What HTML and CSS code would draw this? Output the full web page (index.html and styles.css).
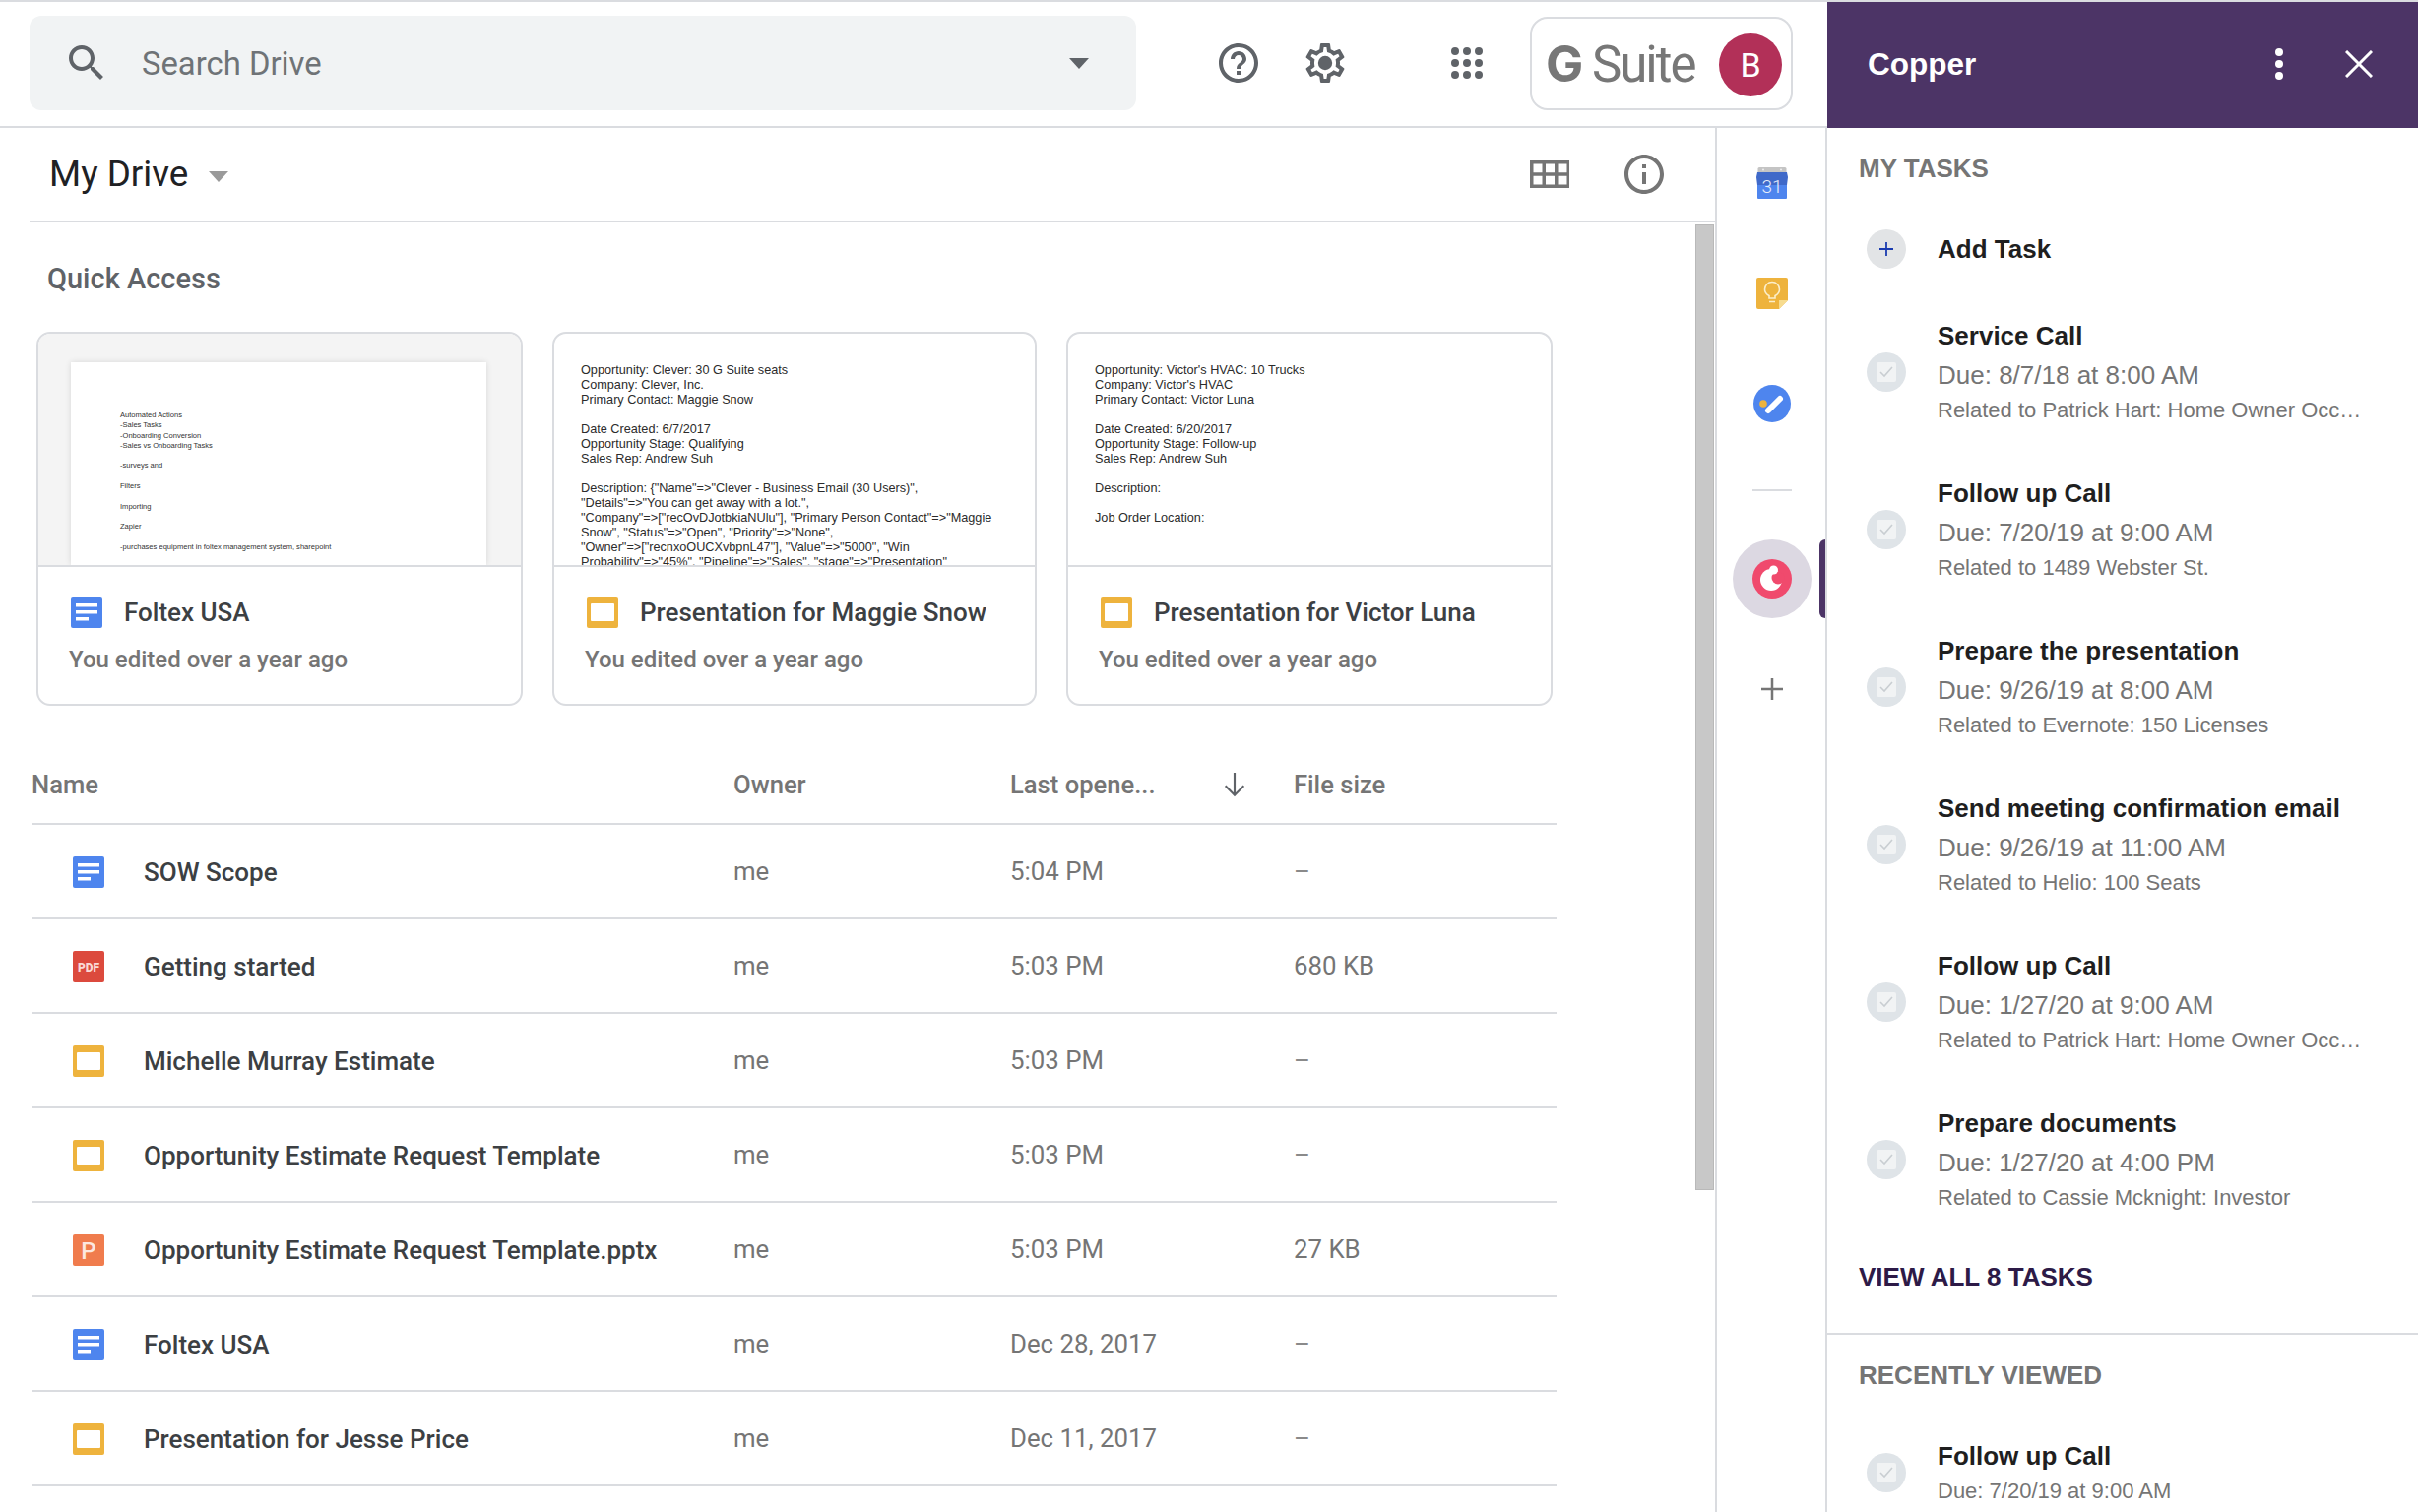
FILE: index.html
```html
<!DOCTYPE html>
<html lang="en">
<head>
  <meta charset="UTF-8" />
  <title>My Drive - Google Drive</title>
  <link rel="stylesheet" href="styles.css">
</head>
<body>

  <!-- Shared icons -->
  <svg class="sprite" aria-hidden="true">
    <symbol id="doc" viewBox="0 0 32 32">
      <rect width="32" height="32" rx="2" fill="#4e85ee"/>
      <rect x="5" y="7" width="22" height="3.5" fill="#fff"/>
      <rect x="5" y="14" width="22" height="3.5" fill="#fff"/>
      <rect x="5" y="21" width="13" height="3.5" fill="#fff"/>
    </symbol>
    <symbol id="slides" viewBox="0 0 32 32">
      <rect width="32" height="32" rx="2" fill="#eeb33d"/>
      <rect x="4" y="7" width="24" height="18" rx="1" fill="#fff"/>
    </symbol>
    <symbol id="check" viewBox="0 0 40 40">
      <circle cx="20" cy="20" r="20" fill="#dfe4e8"/>
      <rect x="10" y="10" width="20" height="20" rx="2" fill="#f1f3f4"/>
      <path d="M14 20l4 4 8-9" fill="none" stroke="#c9ced2" stroke-width="1.6"/>
    </symbol>
  </svg>

  <div class="app">
    <div class="left">

      <header class="topbar">
        <div class="search">
          <svg class="search-icon" viewBox="0 0 24 24"><path d="M15.5 14h-.79l-.28-.27C15.41 12.59 16 11.11 16 9.5 16 5.91 13.09 3 9.5 3S3 5.91 3 9.5 5.91 16 9.5 16c1.61 0 3.09-.59 4.23-1.57l.27.28v.79l5 4.99L20.49 19l-4.99-5zm-6 0C7.01 14 5 11.99 5 9.5S7.01 5 9.5 5 14 7.01 14 9.5 11.99 14 9.5 14z"/></svg>
          <span class="search-text">Search Drive</span>
          <span class="caret caret-dark"></span>
        </div>
        <svg class="top-icon help" viewBox="0 0 24 24"><path d="M11 18h2v-2h-2v2zm1-16C6.48 2 2 6.48 2 12s4.48 10 10 10 10-4.48 10-10S17.52 2 12 2zm0 18c-4.41 0-8-3.59-8-8s3.59-8 8-8 8 3.59 8 8-3.59 8-8 8zm0-14c-2.21 0-4 1.79-4 4h2c0-1.1.9-2 2-2s2 .9 2 2c0 2-3 1.75-3 5h2c0-2.25 3-2.5 3-5 0-2.21-1.79-4-4-4z"/></svg>
        <svg class="top-icon gear" viewBox="0 0 24 24"><path d="M19.43 12.98c.04-.32.07-.64.07-.98 0-.34-.03-.66-.07-.98l2.11-1.65c.19-.15.24-.42.12-.64l-2-3.46c-.09-.16-.26-.25-.44-.25-.06 0-.12.01-.17.03l-2.49 1c-.52-.4-1.08-.73-1.69-.98l-.38-2.65C14.46 2.18 14.25 2 14 2h-4c-.25 0-.46.18-.49.42l-.38 2.65c-.61.25-1.17.59-1.69.98l-2.49-1c-.06-.02-.12-.03-.18-.03-.17 0-.34.09-.43.25l-2 3.46c-.13.22-.07.49.12.64l2.11 1.65c-.04.32-.07.65-.07.98 0 .33.03.66.07.98l-2.11 1.65c-.19.15-.24.42-.12.64l2 3.46c.09.16.26.25.44.25.06 0 .12-.01.17-.03l2.49-1c.52.4 1.08.73 1.69.98l.38 2.65c.03.24.24.42.49.42h4c.25 0 .46-.18.49-.42l.38-2.65c.61-.25 1.17-.59 1.69-.98l2.49 1c.06.02.12.03.18.03.17 0 .34-.09.43-.25l2-3.46c.12-.22.07-.49-.12-.64l-2.11-1.65zm-1.98-1.71c.04.31.05.52.05.73 0 .21-.02.43-.05.73l-.14 1.13.89.7 1.08.84-.7 1.21-1.27-.51-1.04-.42-.9.68c-.43.32-.84.56-1.25.73l-1.06.43-.16 1.13-.2 1.35h-1.4l-.19-1.35-.16-1.13-1.06-.43c-.43-.18-.83-.41-1.23-.71l-.91-.7-1.06.43-1.27.51-.7-1.21 1.08-.84.89-.7-.14-1.13c-.03-.31-.05-.54-.05-.74s.02-.43.05-.73l.14-1.13-.89-.7-1.08-.84.7-1.21 1.27.51 1.04.42.9-.68c.43-.32.84-.56 1.25-.73l1.06-.43.16-1.13.2-1.35h1.39l.19 1.35.16 1.13 1.06.43c.43.18.83.41 1.23.71l.91.7 1.06-.43 1.27-.51.7 1.21-1.07.85-.89.7.14 1.13z"/><circle cx="12" cy="12" r="3.6"/></svg>
        <svg class="apps" viewBox="0 0 32 32">
          <circle cx="4" cy="4" r="4"/><circle cx="16" cy="4" r="4"/><circle cx="28" cy="4" r="4"/>
          <circle cx="4" cy="16" r="4"/><circle cx="16" cy="16" r="4"/><circle cx="28" cy="16" r="4"/>
          <circle cx="4" cy="28" r="4"/><circle cx="16" cy="28" r="4"/><circle cx="28" cy="28" r="4"/>
        </svg>
        <div class="suite">
          <span class="suite-name"><b>G</b> Suite</span>
          <span class="avatar">B</span>
        </div>
      </header>

      <div class="below">
        <section class="drive">
          <div class="drive-bar">
            <h1 class="drive-title">My Drive</h1>
            <span class="caret caret-light"></span>
            <svg class="grid-icon" viewBox="0 0 40 28">
              <path fill="#757575" fill-rule="evenodd" d="M0 0h41v28H0zM3.500 3.500v8.750h9V3.500zm12.500 0v8.750h9V3.500zm12.500 0v8.750h9V3.500zM3.500 15.750v8.750h9v-8.750zm12.500 0v8.750h9v-8.750zm12.500 0v8.750h9v-8.750z"/>
            </svg>
            <svg class="info-icon" viewBox="0 0 24 24"><path d="M11 7h2v2h-2zm0 4h2v6h-2zm1-9C6.48 2 2 6.48 2 12s4.48 10 10 10 10-4.48 10-10S17.52 2 12 2zm0 18c-4.41 0-8-3.59-8-8s3.59-8 8-8 8 3.59 8 8-3.59 8-8 8z"/></svg>
          </div>

          <div class="drive-body">
            <div class="drive-main">
              <h2 class="quick-title">Quick Access</h2>

              <div class="cards">
                <div class="card card-first">
                  <div class="thumb thumb-grey">
                    <div class="paper">
                      <p>Automated Actions<br>-Sales Tasks<br>-Onboarding Conversion<br>-Sales vs Onboarding Tasks</p>
                      <p>-surveys and</p>
                      <p>Filters</p>
                      <p>Importing</p>
                      <p>Zapier</p>
                      <p>-purchases equipment in foltex management system, sharepoint</p>
                    </div>
                  </div>
                  <div class="card-info">
                    <div class="card-name"><svg class="file-icon"><use href="#doc"/></svg>Foltex USA</div>
                    <div class="card-sub">You edited over a year ago</div>
                  </div>
                </div>

                <div class="card card-mid">
                  <div class="thumb slide-text">
                    <p>Opportunity: Clever: 30 G Suite seats<br>Company: Clever, Inc.<br>Primary Contact: Maggie Snow</p>
                    <p>Date Created: 6/7/2017<br>Opportunity Stage: Qualifying<br>Sales Rep: Andrew Suh</p>
                    <p>Description: {"Name"=&gt;"Clever - Business Email (30 Users)",<br>"Details"=&gt;"You can get away with a lot.",<br>"Company"=&gt;["recOvDJotbkiaNUlu"], "Primary Person Contact"=&gt;"Maggie<br>Snow", "Status"=&gt;"Open", "Priority"=&gt;"None",<br>"Owner"=&gt;["recnxoOUCXvbpnL47"], "Value"=&gt;"5000", "Win<br>Probability"=&gt;"45%", "Pipeline"=&gt;"Sales", "stage"=&gt;"Presentation"</p>
                  </div>
                  <div class="card-info">
                    <div class="card-name"><svg class="file-icon"><use href="#slides"/></svg>Presentation for Maggie Snow</div>
                    <div class="card-sub">You edited over a year ago</div>
                  </div>
                </div>

                <div class="card card-last">
                  <div class="thumb slide-text">
                    <p>Opportunity: Victor's HVAC: 10 Trucks<br>Company: Victor's HVAC<br>Primary Contact: Victor Luna</p>
                    <p>Date Created: 6/20/2017<br>Opportunity Stage: Follow-up<br>Sales Rep: Andrew Suh</p>
                    <p>Description:</p>
                    <p>Job Order Location:</p>
                  </div>
                  <div class="card-info">
                    <div class="card-name"><svg class="file-icon"><use href="#slides"/></svg>Presentation for Victor Luna</div>
                    <div class="card-sub">You edited over a year ago</div>
                  </div>
                </div>
              </div>

              <div class="files">
                <div class="file-row file-head">
                  <div>Name</div>
                  <div>Owner</div>
                  <div class="sort-cell">Last opene...
                    <svg class="sort-arrow" viewBox="0 0 24 24"><path d="M12 3v17M5 13l7 7 7-7" fill="none" stroke="#5f6368" stroke-width="1.600"/></svg>
                  </div>
                  <div>File size</div>
                </div>

                <div class="file-row">
                  <div class="file-name"><svg class="file-icon"><use href="#doc"/></svg>SOW Scope</div>
                  <div>me</div><div>5:04 PM</div><div class="dash">–</div>
                </div>
                <div class="file-row">
                  <div class="file-name">
                    <svg class="file-icon" viewBox="0 0 32 32"><rect width="32" height="32" rx="2" fill="#dc4a3d"/><text class="pdf-label" x="16" y="20.500" text-anchor="middle">PDF</text></svg>
                    Getting started
                  </div>
                  <div>me</div><div>5:03 PM</div><div>680 KB</div>
                </div>
                <div class="file-row">
                  <div class="file-name"><svg class="file-icon"><use href="#slides"/></svg>Michelle Murray Estimate</div>
                  <div>me</div><div>5:03 PM</div><div class="dash">–</div>
                </div>
                <div class="file-row">
                  <div class="file-name"><svg class="file-icon"><use href="#slides"/></svg>Opportunity Estimate Request Template</div>
                  <div>me</div><div>5:03 PM</div><div class="dash">–</div>
                </div>
                <div class="file-row">
                  <div class="file-name">
                    <svg class="file-icon" viewBox="0 0 32 32"><rect width="32" height="32" rx="2" fill="#f07c4d"/><text class="ppt-label" x="16" y="25" text-anchor="middle">P</text></svg>
                    Opportunity Estimate Request Template.pptx
                  </div>
                  <div>me</div><div>5:03 PM</div><div>27 KB</div>
                </div>
                <div class="file-row">
                  <div class="file-name"><svg class="file-icon"><use href="#doc"/></svg>Foltex USA</div>
                  <div>me</div><div>Dec 28, 2017</div><div class="dash">–</div>
                </div>
                <div class="file-row">
                  <div class="file-name"><svg class="file-icon"><use href="#slides"/></svg>Presentation for Jesse Price</div>
                  <div>me</div><div>Dec 11, 2017</div><div class="dash">–</div>
                </div>
              </div>
            </div>

            <div class="scrollbar"><div class="scroll-thumb"></div></div>
          </div>
        </section>

        <!-- Add-on rail -->
        <aside class="rail">
          <svg class="rail-icon cal" viewBox="0 0 32 32">
            <rect x="1.500" width="29" height="8" rx="1.500" fill="#c4c4c4"/>
            <circle cx="7" cy="2.500" r="1" fill="#eee"/>
            <circle cx="25" cy="2.500" r="1" fill="#eee"/>
            <rect x="1" y="17" width="30" height="15" rx="1" fill="#4e85ee"/>
            <path d="M1 5h30l1 5-1 8H1l-1-8z" fill="#3f69c9"/>
            <text class="cal-day" x="16" y="25.500" text-anchor="middle">31</text>
          </svg>
          <svg class="rail-icon keep" viewBox="0 0 32 32">
            <path d="M2 0h28a2 2 0 0 1 2 2v21l-9 9H2a2 2 0 0 1-2-2V2a2 2 0 0 1 2-2z" fill="#eeb33d"/>
            <path d="M32 23h-9v9z" fill="#f7dc8f"/>
            <path d="M13 21v-2.500c-2.500-1.300-4.500-3.500-4.500-6.500a7.500 7.500 0 0 1 15 0c0 3-2 5.200-4.500 6.500V21zM13 24.500h6" fill="none" stroke="#fbeecb" stroke-width="1.600"/>
          </svg>
          <svg class="rail-icon tasks" viewBox="0 0 38 38">
            <circle cx="19" cy="19" r="19" fill="#4e85ee"/>
            <circle cx="10" cy="19" r="3.800" fill="#eeb33d"/>
            <path d="M15 26L27 14" stroke="#fff" stroke-width="6" stroke-linecap="round"/>
          </svg>
          <div class="rail-line"></div>
          <div class="rail-active">
            <svg class="copper-logo" viewBox="0 0 40 40">
              <circle cx="20" cy="20" r="20" fill="#f04a6d"/>
              <circle cx="19" cy="21" r="11" fill="#fff"/>
              <circle cx="26" cy="19" r="6.500" fill="#f04a6d"/>
              <circle cx="21.500" cy="11" r="4.500" fill="#fff"/>
            </svg>
            <span class="rail-tab"></span>
          </div>
          <svg class="rail-add" viewBox="0 0 24 24"><path d="M12 1v22M1 12h22" stroke="#757575" stroke-width="2.500" fill="none"/></svg>
        </aside>
      </div>
    </div>

    <!-- Copper panel -->
    <aside class="panel">
      <div class="panel-head">
        <span class="panel-title">Copper</span>
        <svg class="panel-dots" viewBox="0 0 8 32"><circle cx="4" cy="4" r="4"/><circle cx="4" cy="16" r="4"/><circle cx="4" cy="28" r="4"/></svg>
        <svg class="panel-close" viewBox="0 0 28 28"><path d="M1 1l26 26M27 1L1 27" stroke="#fff" stroke-width="3" fill="none"/></svg>
      </div>

      <div class="panel-section">
        <h3 class="section-title">MY TASKS</h3>

        <div class="add-task">
          <span class="add-circle"><svg viewBox="0 0 14 14"><path d="M7 0v14M0 7h14" stroke="#1a3bb0" stroke-width="1.800" fill="none"/></svg></span>
          <span class="task-name">Add Task</span>
        </div>

        <div class="task">
          <svg class="task-check"><use href="#check"/></svg>
          <div class="task-text">
            <div class="task-name">Service Call</div>
            <div class="task-due">Due: 8/7/18 at 8:00 AM</div>
            <div class="task-rel">Related to Patrick Hart: Home Owner Occ…</div>
          </div>
        </div>
        <div class="task">
          <svg class="task-check"><use href="#check"/></svg>
          <div class="task-text">
            <div class="task-name">Follow up Call</div>
            <div class="task-due">Due: 7/20/19 at 9:00 AM</div>
            <div class="task-rel">Related to 1489 Webster St.</div>
          </div>
        </div>
        <div class="task">
          <svg class="task-check"><use href="#check"/></svg>
          <div class="task-text">
            <div class="task-name">Prepare the presentation</div>
            <div class="task-due">Due: 9/26/19 at 8:00 AM</div>
            <div class="task-rel">Related to Evernote: 150 Licenses</div>
          </div>
        </div>
        <div class="task">
          <svg class="task-check"><use href="#check"/></svg>
          <div class="task-text">
            <div class="task-name">Send meeting confirmation email</div>
            <div class="task-due">Due: 9/26/19 at 11:00 AM</div>
            <div class="task-rel">Related to Helio: 100 Seats</div>
          </div>
        </div>
        <div class="task">
          <svg class="task-check"><use href="#check"/></svg>
          <div class="task-text">
            <div class="task-name">Follow up Call</div>
            <div class="task-due">Due: 1/27/20 at 9:00 AM</div>
            <div class="task-rel">Related to Patrick Hart: Home Owner Occ…</div>
          </div>
        </div>
        <div class="task">
          <svg class="task-check"><use href="#check"/></svg>
          <div class="task-text">
            <div class="task-name">Prepare documents</div>
            <div class="task-due">Due: 1/27/20 at 4:00 PM</div>
            <div class="task-rel">Related to Cassie Mcknight: Investor</div>
          </div>
        </div>

        <a class="view-all">VIEW ALL 8 TASKS</a>
      </div>

      <div class="panel-section">
        <h3 class="section-title">RECENTLY VIEWED</h3>
        <div class="task task-small">
          <svg class="task-check"><use href="#check"/></svg>
          <div class="task-text">
            <div class="task-name">Follow up Call</div>
            <div class="task-due">Due: 7/20/19 at 9:00 AM</div>
          </div>
        </div>
      </div>
    </aside>
  </div>

</body>
</html>
```
FILE: styles.css
```css
:root {
  --line: #dadce0;
  --grey-text: #757575;
  --dark-text: #3c4043;
  --purple: #4c3466;
}

* {
  box-sizing: border-box;
}

html, body {
  margin: 0;
  padding: 0;
  height: 100%;
  overflow: hidden;
  background: #fff;
  font-family: Roboto, sans-serif;
}

h1, h2, h3, p {
  margin: 0;
  font-weight: inherit;
}

.sprite {
  position: absolute;
  width: 0;
  height: 0;
}

.app {
  display: flex;
  width: 2456px;
  height: 1536px;
  overflow: hidden;
}

.left {
  width: 1856px;
  flex: none;
  display: flex;
  flex-direction: column;
}

/* Top bar */
.topbar {
  height: 130px;
  flex: none;
  display: flex;
  align-items: center;
  padding: 0 35px 2px 30px;
  border-top: 2px solid var(--line);
  border-bottom: 2px solid var(--line);
}

.search {
  width: 1124px;
  height: 96px;
  flex: none;
  display: flex;
  align-items: center;
  padding: 0 48px 0 34px;
  background: #f1f3f4;
  border-radius: 12px;
}

.search-icon {
  width: 48px;
  height: 48px;
  fill: #5f6368;
}

.search-text {
  margin-left: 32px;
  padding-top: 2px;
  font-size: 32.8px;
  color: #6f7377;
}

.caret {
  width: 0;
  height: 0;
  border-left: 10px solid transparent;
  border-right: 10px solid transparent;
}

.caret-dark {
  margin-left: auto;
  border-top: 11px solid #5f6368;
}

.caret-light {
  margin-left: 21px;
  margin-top: 4px;
  border-top: 11px solid #9a9a9a;
}

.top-icon {
  width: 48px;
  height: 48px;
  flex: none;
  fill: #5f6368;
}

.help {
  margin-left: 80px;
}

.gear {
  margin-left: 40px;
}

.apps {
  width: 32px;
  height: 32px;
  flex: none;
  margin-left: 104px;
  fill: #5f6368;
}

.suite {
  width: 267px;
  height: 95px;
  flex: none;
  margin-left: 48px;
  display: flex;
  align-items: center;
  justify-content: space-between;
  padding: 0 9px 0 14px;
  border: 2px solid var(--line);
  border-radius: 18px;
}

.suite-name {
  font-size: 51px;
  color: #777;
  letter-spacing: -2px;
  white-space: nowrap;
}

.suite-name b {
  font-family: Inter, Roboto, sans-serif;
  font-weight: 700;
}

.avatar {
  width: 64px;
  height: 64px;
  margin-top: 4px;
  display: flex;
  align-items: center;
  justify-content: center;
  border-radius: 50%;
  background: #b23058;
  color: #fff;
  font-size: 34px;
}

.below {
  flex: 1;
  display: flex;
  min-height: 0;
}

/* Drive */
.drive {
  width: 1744px;
  flex: none;
  display: flex;
  flex-direction: column;
  border-right: 2px solid var(--line);
}

.drive-bar {
  height: 96px;
  flex: none;
  margin-left: 30px;
  display: flex;
  align-items: center;
  padding: 0 48px 0 20px;
  border-bottom: 2px solid var(--line);
}

.drive-title {
  margin-bottom: 2px;
  font-size: 36.8px;
  color: #202124;
}

.grid-icon {
  width: 40px;
  height: 28px;
  margin-left: auto;
}

.info-icon {
  width: 48px;
  height: 48px;
  margin-left: 52px;
  fill: #757575;
}

.drive-body {
  flex: 1;
  display: flex;
  min-height: 0;
}

.drive-main {
  flex: 1;
  min-width: 0;
}

.scrollbar {
  width: 19px;
  margin-right: 1px;
}

.scroll-thumb {
  height: 981px;
  margin-top: 2px;
  background: #c8c8c8;
  border: 1px solid #b9b9b9;
}

.quick-title {
  height: 111px;
  padding: 39px 0 0 48px;
  font-size: 29px;
  font-weight: 500;
  line-height: 36px;
  color: #5f6368;
}

.cards {
  display: flex;
  gap: 30px;
  margin-left: 37px;
}

.card {
  height: 380px;
  display: flex;
  flex-direction: column;
  overflow: hidden;
  border: 2px solid var(--line);
  border-radius: 14px;
}

.card-first {
  width: 494px;
}

.card-mid {
  width: 492px;
}

.card-last {
  width: 494px;
}

.thumb {
  height: 237px;
  flex: none;
  overflow: hidden;
  border-bottom: 2px solid var(--line);
}

.thumb-grey {
  padding: 29px 35px 0 33px;
  background: #f4f4f4;
}

.paper {
  height: 206px;
  padding: 49px 50px 0;
  background: #fff;
  box-shadow: 0 0 6px rgba(0, 0, 0, 0.12);
  font-family: "Liberation Sans", sans-serif;
  font-size: 7.55px;
  line-height: 10.3px;
  color: #333;
}

.paper p {
  margin-bottom: 10.3px;
  white-space: nowrap;
}

.paper p:last-child {
  margin-bottom: 0;
}

.slide-text {
  padding: 30px 0 0 27px;
  font-family: "Liberation Sans", sans-serif;
  font-size: 12.7px;
  line-height: 15px;
  color: #2b2b2b;
  white-space: nowrap;
}

.slide-text p {
  margin-bottom: 15px;
}

.card-info {
  padding: 30px 0 0 31px;
}

.card-name {
  display: flex;
  align-items: center;
  height: 32px;
  font-size: 26px;
  font-weight: 500;
  color: var(--dark-text);
}

.card-name .file-icon {
  margin: 0 22px 0 2px;
}

.card-sub {
  margin-top: 15px;
  font-size: 24px;
  font-weight: 500;
  line-height: 34px;
  color: var(--grey-text);
}

.file-icon {
  width: 32px;
  height: 32px;
  flex: none;
}

/* File list */
.files {
  width: 1549px;
  margin: 41px 0 0 32px;
}

.file-row {
  display: grid;
  grid-template-columns: 713px 281px 288px 1fr;
  align-items: center;
  height: 96px;
  border-bottom: 2px solid var(--line);
  font-size: 25.8px;
  color: var(--grey-text);
}

.file-head {
  height: 80px;
  align-items: start;
  padding-top: 23px;
  font-size: 25.6px;
  font-weight: 500;
  line-height: 32px;
}

.sort-cell {
  display: flex;
  justify-content: space-between;
  align-items: center;
  width: 244px;
}

.sort-arrow {
  width: 32px;
  height: 32px;
}

.file-name {
  display: flex;
  align-items: center;
  gap: 40px;
  padding: 2px 0 0 42px;
  font-size: 26px;
  font-weight: 500;
  color: var(--dark-text);
}

.dash {
  color: #8a8a8a;
}

.pdf-label {
  font-family: Roboto, sans-serif;
  font-size: 12px;
  font-weight: 900;
  fill: #f9d9d5;
}

.ppt-label {
  font-family: Roboto, sans-serif;
  font-size: 24px;
  font-weight: 500;
  fill: #fce7de;
}

/* Rail */
.rail {
  width: 112px;
  flex: none;
  display: flex;
  flex-direction: column;
  align-items: center;
  padding-left: 2px;
  border-right: 2px solid var(--line);
}

.rail-icon {
  flex: none;
}

.cal {
  width: 32px;
  height: 32px;
  margin-top: 40px;
}

.cal-day {
  font-family: Roboto, sans-serif;
  font-size: 19px;
  font-weight: 300;
  fill: #e8eefa;
}

.keep {
  width: 32px;
  height: 32px;
  margin-top: 80px;
}

.tasks {
  width: 38px;
  height: 38px;
  margin-top: 77px;
}

.rail-line {
  width: 40px;
  height: 2px;
  margin-top: 68px;
  background: var(--line);
}

.rail-active {
  position: relative;
  width: 80px;
  height: 80px;
  margin-top: 49px;
  display: flex;
  align-items: center;
  justify-content: center;
  border-radius: 50%;
  background: #dcd8e2;
}

.copper-logo {
  width: 40px;
  height: 40px;
}

.rail-tab {
  position: absolute;
  top: 0;
  right: -14px;
  width: 6px;
  height: 80px;
  background: var(--purple);
  border-radius: 6px 0 0 6px;
}

.rail-add {
  width: 24px;
  height: 24px;
  margin-top: 60px;
}

/* Copper panel */
.panel {
  width: 600px;
  flex: none;
  font-family: "Liberation Sans", sans-serif;
}

.panel-head {
  height: 130px;
  display: flex;
  align-items: center;
  padding: 0 46px 2px 41px;
  background: var(--purple);
  border-top: 2px solid var(--line);
  color: #fff;
}

.panel-title {
  font-size: 31.5px;
  font-weight: 700;
}

.panel-dots {
  width: 8px;
  height: 32px;
  margin-left: auto;
  fill: #fff;
}

.panel-close {
  width: 28px;
  height: 28px;
  margin-left: 63px;
}

.panel-section {
  padding: 26px 0 0 32px;
}

.panel-section + .panel-section {
  border-top: 2px solid var(--line);
}

.section-title {
  height: 30px;
  font-size: 26px;
  font-weight: 700;
  line-height: 30px;
  color: var(--grey-text);
}

.add-task {
  display: flex;
  align-items: center;
  gap: 32px;
  height: 40px;
  margin: 47px 0 51px 8px;
}

.add-circle {
  width: 40px;
  height: 40px;
  display: flex;
  align-items: center;
  justify-content: center;
  border-radius: 50%;
  background: #e2e4e6;
}

.add-circle svg {
  width: 14px;
  height: 14px;
}

.task {
  display: flex;
  align-items: center;
  gap: 32px;
  height: 109px;
  margin: 0 0 51px 8px;
}

.task-check {
  width: 40px;
  height: 40px;
  flex: none;
  margin-bottom: 2px;
}

.task-text {
  min-width: 0;
  align-self: flex-start;
}

.task-name {
  font-size: 26px;
  font-weight: 700;
  line-height: 34px;
  color: #1f1f1f;
  white-space: nowrap;
}

.task-due {
  margin-top: 6px;
  font-size: 26px;
  line-height: 34px;
  color: var(--grey-text);
}

.task-rel {
  margin-top: 4px;
  font-size: 22px;
  line-height: 30px;
  color: var(--grey-text);
  white-space: nowrap;
}

.view-all {
  display: block;
  height: 30px;
  margin: -2px 0 42px;
  font-size: 26px;
  font-weight: 700;
  line-height: 30px;
  color: #2d1a47;
}

.task-small {
  height: 70px;
  margin-top: 50px;
  margin-bottom: 0;
}

.task-small .task-due {
  margin-top: 2px;
  font-size: 22px;
}
```
